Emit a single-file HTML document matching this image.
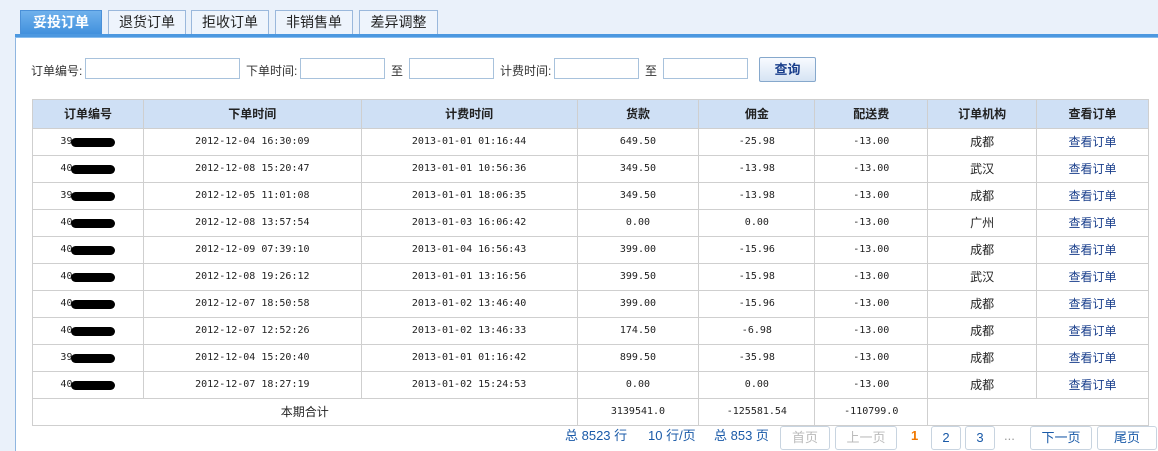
<!DOCTYPE html>
<html><head><meta charset="utf-8"><style>
*{margin:0;padding:0;box-sizing:border-box}
body{width:1158px;height:446px;overflow:hidden;background:#eaf1fa;font-family:"Liberation Sans","Noto Sans CJK SC",sans-serif;font-size:12px;color:#222;position:relative}
.tab{position:absolute;top:10px;height:25px;border:1px solid #9ab8dc;border-bottom:none;background:#eef4fc;font-size:14px;text-align:center;line-height:23px;color:#222}
.tab.on{background:linear-gradient(#6fb1ec,#3f8fdc);color:#fff;font-weight:bold;border-color:#4a90d8}
.line{position:absolute;left:15px;right:0;top:34px;height:4px;background:#4c98e0;border-bottom:1px solid #86bcee}
.panel{position:absolute;left:15px;top:38px;right:0;bottom:-5px;background:#fff;border-left:1px solid #8fb6e0}
.lbl{position:absolute;top:62px;font-size:12px;color:#333}
.inp{position:absolute;top:58px;height:21px;border:1px solid #a8c2dc;background:#fff}
.btn{position:absolute;left:759px;top:57px;width:57px;height:25px;border:1px solid #86a8cc;border-radius:2px;background:linear-gradient(#f8fbff,#d6e4f3);color:#1a3f8c;font-weight:bold;font-size:13px;text-align:center;line-height:23px}
.t{position:absolute;left:32px;top:99px;width:1117px;border-left:1px solid #cfcfcf;border-top:1px solid #cfcfcf}
.r{display:flex;height:27px;border-bottom:1px solid #cfcfcf}
.r.h{height:29px;background:#cfe0f5;font-weight:bold;font-size:12px}
.r>div{border-right:1px solid #cfcfcf;display:flex;align-items:center;justify-content:center;white-space:nowrap;font-size:12px;line-height:14px}
.r>div:nth-child(1){width:111px}.r>div:nth-child(2){width:218px}.r>div:nth-child(3){width:216px}.r>div:nth-child(4){width:122px}.r>div:nth-child(5){width:116px}.r>div:nth-child(6){width:113px}.r>div:nth-child(7){width:109px}.r>div:nth-child(8){width:112px}
.r:not(.h)>div:nth-child(-n+6){font-family:"DejaVu Sans Mono",monospace;font-size:10px}
.r>div:nth-child(8){color:#1a3f8c}
.r.h>div:nth-child(8){color:#222}
.r.s>div{font-family:"DejaVu Sans Mono",monospace;font-size:10px}
.r.s>div:nth-child(1){width:545px;font-family:"Liberation Sans","Noto Sans CJK SC",sans-serif;font-size:12px}
.r.s>div:nth-child(2){width:122px}.r.s>div:nth-child(3){width:116px}.r.s>div:nth-child(4){width:113px}.r.s>div:nth-child(5){width:221px}
.blob{display:inline-block;width:44px;height:9px;background:#000;border-radius:5px;margin-left:-1px}
.pg{position:absolute;top:425px;height:24px;font-size:13px;line-height:22px;color:#1a5aa8}
.pb{position:absolute;top:426px;height:24px;border:1px solid #c8d4e0;border-radius:3px;background:#fff;font-size:13px;text-align:center;line-height:22px;color:#1a5aa8}
</style></head><body>
<div class="tab on" style="left:20px;width:82px">妥投订单</div>
<div class="tab" style="left:108px;width:78px">退货订单</div>
<div class="tab" style="left:191px;width:78px">拒收订单</div>
<div class="tab" style="left:275px;width:78px">非销售单</div>
<div class="tab" style="left:359px;width:79px">差异调整</div>
<div class="line"></div>
<div class="panel"></div>
<div class="lbl" style="left:31px">订单编号:</div>
<div class="inp" style="left:85px;width:155px"></div>
<div class="lbl" style="left:246px">下单时间:</div>
<div class="inp" style="left:300px;width:85px"></div>
<div class="lbl" style="left:391px">至</div>
<div class="inp" style="left:409px;width:85px"></div>
<div class="lbl" style="left:500px">计费时间:</div>
<div class="inp" style="left:554px;width:85px"></div>
<div class="lbl" style="left:645px">至</div>
<div class="inp" style="left:663px;width:85px"></div>
<div class="btn">查询</div>
<div class="t">
<div class="r h"><div>订单编号</div><div>下单时间</div><div>计费时间</div><div>货款</div><div>佣金</div><div>配送费</div><div>订单机构</div><div>查看订单</div></div>
<div class="r"><div>39<span class="blob"></span></div><div>2012-12-04 16:30:09</div><div>2013-01-01 01:16:44</div><div>649.50</div><div>-25.98</div><div>-13.00</div><div>成都</div><div>查看订单</div></div>
<div class="r"><div>40<span class="blob"></span></div><div>2012-12-08 15:20:47</div><div>2013-01-01 10:56:36</div><div>349.50</div><div>-13.98</div><div>-13.00</div><div>武汉</div><div>查看订单</div></div>
<div class="r"><div>39<span class="blob"></span></div><div>2012-12-05 11:01:08</div><div>2013-01-01 18:06:35</div><div>349.50</div><div>-13.98</div><div>-13.00</div><div>成都</div><div>查看订单</div></div>
<div class="r"><div>40<span class="blob"></span></div><div>2012-12-08 13:57:54</div><div>2013-01-03 16:06:42</div><div>0.00</div><div>0.00</div><div>-13.00</div><div>广州</div><div>查看订单</div></div>
<div class="r"><div>40<span class="blob"></span></div><div>2012-12-09 07:39:10</div><div>2013-01-04 16:56:43</div><div>399.00</div><div>-15.96</div><div>-13.00</div><div>成都</div><div>查看订单</div></div>
<div class="r"><div>40<span class="blob"></span></div><div>2012-12-08 19:26:12</div><div>2013-01-01 13:16:56</div><div>399.50</div><div>-15.98</div><div>-13.00</div><div>武汉</div><div>查看订单</div></div>
<div class="r"><div>40<span class="blob"></span></div><div>2012-12-07 18:50:58</div><div>2013-01-02 13:46:40</div><div>399.00</div><div>-15.96</div><div>-13.00</div><div>成都</div><div>查看订单</div></div>
<div class="r"><div>40<span class="blob"></span></div><div>2012-12-07 12:52:26</div><div>2013-01-02 13:46:33</div><div>174.50</div><div>-6.98</div><div>-13.00</div><div>成都</div><div>查看订单</div></div>
<div class="r"><div>39<span class="blob"></span></div><div>2012-12-04 15:20:40</div><div>2013-01-01 01:16:42</div><div>899.50</div><div>-35.98</div><div>-13.00</div><div>成都</div><div>查看订单</div></div>
<div class="r"><div>40<span class="blob"></span></div><div>2012-12-07 18:27:19</div><div>2013-01-02 15:24:53</div><div>0.00</div><div>0.00</div><div>-13.00</div><div>成都</div><div>查看订单</div></div>
<div class="r s"><div>本期合计</div><div>3139541.0</div><div>-125581.54</div><div>-110799.0</div><div></div></div>
</div>
<div class="pg" style="left:565px">总 8523 行</div>
<div class="pg" style="left:648px">10 行/页</div>
<div class="pg" style="left:714px">总 853 页</div>
<div class="pb" style="left:780px;width:50px;color:#bbb">首页</div>
<div class="pb" style="left:835px;width:62px;color:#bbb">上一页</div>
<div class="pg" style="left:911px;color:#f07800;font-weight:bold">1</div>
<div class="pb" style="left:931px;width:30px">2</div>
<div class="pb" style="left:965px;width:30px">3</div>
<div class="pg" style="left:1004px;color:#999">...</div>
<div class="pb" style="left:1030px;width:62px">下一页</div>
<div class="pb" style="left:1097px;width:60px">尾页</div>
</body></html>
